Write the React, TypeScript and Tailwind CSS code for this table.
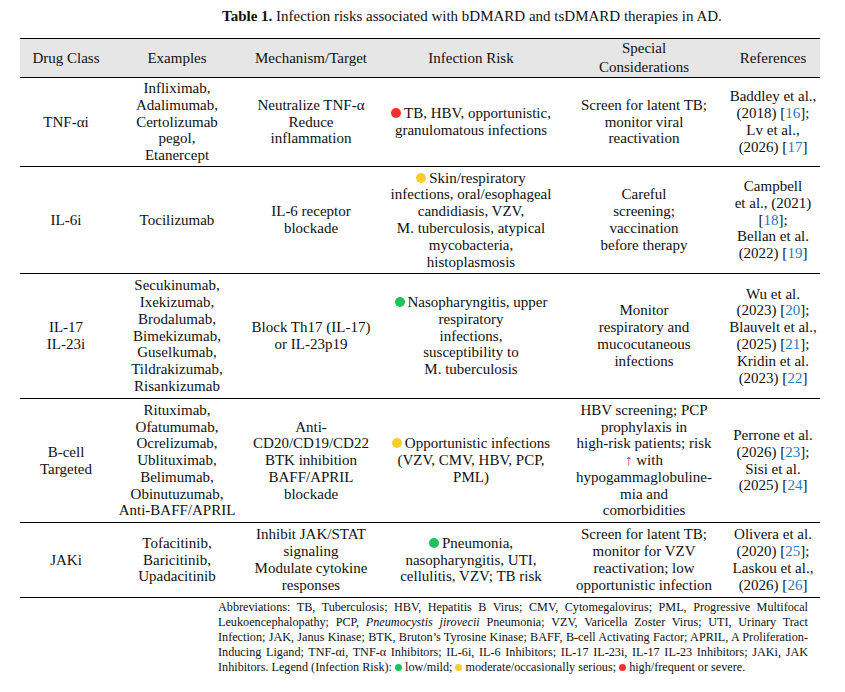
const serif = { fontFamily: '"Liberation Serif", "Times New Roman", serif' }

type Risk = "red" | "yellow" | "green"

const dotColor: Record<Risk, string> = {
  red: "bg-[#f2302f]",
  yellow: "bg-[#f8cd2c]",
  green: "bg-[#1ec25b]",
}

const Dot = ({ risk, small }: { risk: Risk; small?: boolean }) => (
  <span
    className={`inline-block rounded-full align-middle ${dotColor[risk]} ${
      small ? "w-[7px] h-[7px] mr-[3px] -mt-[2px]" : "w-[10px] h-[10px] mr-[3px] -mt-[3px]"
    }`}
  />
)

const Ref = ({ n }: { n: number }) => <span className="text-[#2b7bbb]">{n}</span>

const Lines = ({ lines }: { lines: React.ReactNode[] }) => (
  <>
    {lines.map((l, i) => (
      <div key={i} className="whitespace-nowrap">
        {l}
      </div>
    ))}
  </>
)

type Row = {
  h: string
  cls: React.ReactNode[]
  ex: React.ReactNode[]
  mech: React.ReactNode[]
  risk: Risk
  inf: React.ReactNode[]
  spec: React.ReactNode[]
  refs: React.ReactNode[]
}

const rows: Row[] = [
  {
    h: "h-[89px]",
    cls: ["TNF-αi"],
    ex: ["Infliximab,", "Adalimumab,", "Certolizumab", "pegol,", "Etanercept"],
    mech: ["Neutralize TNF-α", "Reduce", "inflammation"],
    risk: "red",
    inf: ["TB, HBV, opportunistic,", "granulomatous infections"],
    spec: ["Screen for latent TB;", "monitor viral", "reactivation"],
    refs: [
      "Baddley et al.,",
      <>(2018) [<Ref n={16} />];</>,
      "Lv et al.,",
      <>(2026) [<Ref n={17} />]</>,
    ],
  },
  {
    h: "h-[107px]",
    cls: ["IL-6i"],
    ex: ["Tocilizumab"],
    mech: ["IL-6 receptor", "blockade"],
    risk: "yellow",
    inf: [
      "Skin/respiratory",
      "infections, oral/esophageal",
      "candidiasis, VZV,",
      "M. tuberculosis, atypical",
      "mycobacteria,",
      "histoplasmosis",
    ],
    spec: ["Careful", "screening;", "vaccination", "before therapy"],
    refs: [
      "Campbell",
      "et al., (2021)",
      <>[<Ref n={18} />];</>,
      "Bellan et al.",
      <>(2022) [<Ref n={19} />]</>,
    ],
  },
  {
    h: "h-[125px]",
    cls: ["IL-17", "IL-23i"],
    ex: [
      "Secukinumab,",
      "Ixekizumab,",
      "Brodalumab,",
      "Bimekizumab,",
      "Guselkumab,",
      "Tildrakizumab,",
      "Risankizumab",
    ],
    mech: ["Block Th17 (IL-17)", "or IL-23p19"],
    risk: "green",
    inf: [
      "Nasopharyngitis, upper",
      "respiratory",
      "infections,",
      "susceptibility to",
      "M. tuberculosis",
    ],
    spec: ["Monitor", "respiratory and", "mucocutaneous", "infections"],
    refs: [
      "Wu et al.",
      <>(2023) [<Ref n={20} />];</>,
      "Blauvelt et al.,",
      <>(2025) [<Ref n={21} />];</>,
      "Kridin et al.",
      <>(2023) [<Ref n={22} />]</>,
    ],
  },
  {
    h: "h-[124px]",
    cls: ["B-cell", "Targeted"],
    ex: [
      "Rituximab,",
      "Ofatumumab,",
      "Ocrelizumab,",
      "Ublituximab,",
      "Belimumab,",
      "Obinutuzumab,",
      "Anti-BAFF/APRIL",
    ],
    mech: ["Anti-", "CD20/CD19/CD22", "BTK inhibition", "BAFF/APRIL", "blockade"],
    risk: "yellow",
    inf: ["Opportunistic infections", "(VZV, CMV, HBV, PCP,", "PML)"],
    spec: [
      "HBV screening; PCP",
      "prophylaxis in",
      "high-risk patients; risk",
      <>
        <span className="text-[#a2336c]">↑</span> with
      </>,
      "hypogammaglobuline-",
      "mia and",
      "comorbidities",
    ],
    refs: [
      "Perrone et al.",
      <>(2026) [<Ref n={23} />];</>,
      "Sisi et al.",
      <>(2025) [<Ref n={24} />]</>,
    ],
  },
  {
    h: "h-[75px]",
    cls: ["JAKi"],
    ex: ["Tofacitinib,", "Baricitinib,", "Upadacitinib"],
    mech: ["Inhibit JAK/STAT", "signaling", "Modulate cytokine", "responses"],
    risk: "green",
    inf: ["Pneumonia,", "nasopharyngitis, UTI,", "cellulitis, VZV; TB risk"],
    spec: ["Screen for latent TB;", "monitor for VZV", "reactivation; low", "opportunistic infection"],
    refs: [
      "Olivera et al.",
      <>(2020) [<Ref n={25} />];</>,
      "Laskou et al.,",
      <>(2026) [<Ref n={26} />]</>,
    ],
  },
]

const widths = ["w-[92px]", "w-[130px]", "w-[138px]", "w-[182px]", "w-[164px]", "w-[94px]"]

export default function App() {
  return (
    <div className="w-[845px] h-[692px] bg-white text-[#111]" style={serif}>
      <div className="pt-[7px] pl-[222px] text-[15px] leading-[18px] whitespace-nowrap">
        <span className="font-bold">Table 1.</span> Infection risks associated with bDMARD and tsDMARD
        therapies in AD.
      </div>

      <table className="mt-[13px] ml-[20px] w-[800px] table-fixed border-collapse text-[15px] leading-[16.8px] text-center">
        <colgroup>
          {widths.map((w, i) => (
            <col key={i} className={w} />
          ))}
        </colgroup>
        <thead>
          <tr className="h-[37px] bg-[#e6e6e6] border-t-[1.5px] border-b border-black">
            <th className="font-normal">Drug Class</th>
            <th className="font-normal">Examples</th>
            <th className="font-normal">Mechanism/Target</th>
            <th className="font-normal">Infection Risk</th>
            <th className="font-normal leading-[19px]">
              Special
              <br />
              Considerations
            </th>
            <th className="font-normal">References</th>
          </tr>
        </thead>
        <tbody>
          {rows.map((r, i) => (
            <tr key={i} className={`${r.h} border-b border-black`}>
              <td>
                <Lines lines={r.cls} />
              </td>
              <td>
                <Lines lines={r.ex} />
              </td>
              <td>
                <Lines lines={r.mech} />
              </td>
              <td>
                <Lines
                  lines={r.inf.map((l, j) =>
                    j === 0 ? (
                      <>
                        <Dot risk={r.risk} />
                        {l}
                      </>
                    ) : (
                      l
                    )
                  )}
                />
              </td>
              <td>
                <Lines lines={r.spec} />
              </td>
              <td>
                <Lines lines={r.refs} />
              </td>
            </tr>
          ))}
        </tbody>
      </table>

      <div className="ml-[218px] w-[590px] pt-[2px] text-[12.2px] leading-[15px]">
        <div className="text-justify [text-align-last:justify]">
          Abbreviations: TB, Tuberculosis; HBV, Hepatitis B Virus; CMV, Cytomegalovirus; PML, Progressive Multifocal
        </div>
        <div className="text-justify [text-align-last:justify]">
          Leukoencephalopathy; PCP, <i>Pneumocystis jirovecii</i> Pneumonia; VZV, Varicella Zoster Virus; UTI, Urinary
          Tract
        </div>
        <div className="text-justify [text-align-last:justify]">
          Infection; JAK, Janus Kinase; BTK, Bruton’s Tyrosine Kinase; BAFF, B-cell Activating Factor; APRIL, A
          Proliferation-
        </div>
        <div className="text-justify [text-align-last:justify]">
          Inducing Ligand; TNF-αi, TNF-α Inhibitors; IL-6i, IL-6 Inhibitors; IL-17 IL-23i, IL-17 IL-23 Inhibitors;
          JAKi, JAK
        </div>
        <div className="whitespace-nowrap">
          Inhibitors. Legend (Infection Risk): <Dot risk="green" small />
          low/mild; <Dot risk="yellow" small />
          moderate/occasionally serious; <Dot risk="red" small />
          high/frequent or severe.
        </div>
      </div>
    </div>
  )
}
